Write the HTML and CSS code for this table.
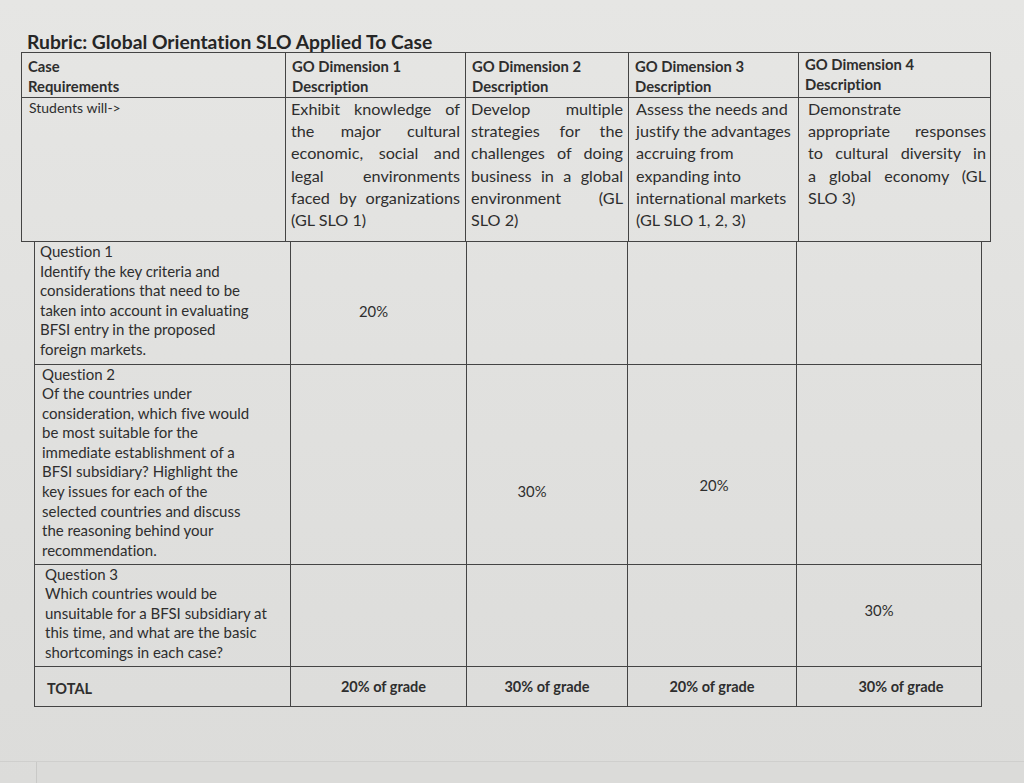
FILE: index.html
```html
<!DOCTYPE html>
<html lang="en">
<head>
<meta charset="utf-8">
<title>Rubric: Global Orientation SLO Applied To Case</title>
<link rel="stylesheet" href="styles.css">
</head>
<body>
<div class="page">
  <h1 class="title">Rubric: Global Orientation SLO Applied To Case</h1>
  <table class="rubric top">
    <colgroup>
      <col class="c0"><col class="c1"><col class="c2"><col class="c3"><col class="c4">
    </colgroup>
    <tr class="head">
      <th>Case<br>Requirements</th>
      <th>GO Dimension 1<br>Description</th>
      <th>GO Dimension 2<br>Description</th>
      <th>GO Dimension 3<br>Description</th>
      <th class="h4">GO Dimension 4<br>Description</th>
    </tr>
    <tr class="desc">
      <td class="students">Students will-&gt;</td>
      <td class="just">
        <span class="ln">Exhibit knowledge of</span>
        <span class="ln">the major cultural</span>
        <span class="ln">economic, social and</span>
        <span class="ln">legal environments</span>
        <span class="ln">faced by organizations</span>
        <span class="last">(GL SLO 1)</span>
      </td>
      <td class="just">
        <span class="ln">Develop multiple</span>
        <span class="ln">strategies for the</span>
        <span class="ln">challenges of doing</span>
        <span class="ln">business in a global</span>
        <span class="ln">environment (GL</span>
        <span class="last">SLO 2)</span>
      </td>
      <td class="left">Assess the needs and<br>justify the advantages<br>accruing from<br>expanding into<br>international markets<br>(GL SLO 1, 2, 3)</td>
      <td class="just d4">
        <span class="last">Demonstrate</span>
        <span class="ln">appropriate responses</span>
        <span class="ln">to cultural diversity in</span>
        <span class="ln">a global economy (GL</span>
        <span class="last">SLO 3)</span>
      </td>
    </tr>
  </table>
  <table class="rubric bottom">
    <colgroup>
      <col class="b0"><col class="b1"><col class="b2"><col class="b3"><col class="b4">
    </colgroup>
    <tr class="q1">
      <td class="q">Question 1<br>Identify the key criteria and<br>considerations that need to be<br>taken into account in evaluating<br>BFSI entry in the proposed<br>foreign markets.</td>
      <td class="pct pq1">20%</td>
      <td></td>
      <td></td>
      <td></td>
    </tr>
    <tr class="q2">
      <td class="q">Question 2<br>Of the countries under<br>consideration, which five would<br>be most suitable for the<br>immediate establishment of a<br>BFSI subsidiary? Highlight the<br>key issues for each of the<br>selected countries and discuss<br>the reasoning behind your<br>recommendation.</td>
      <td></td>
      <td class="pct pq2a">30%</td>
      <td class="pct pq2b">20%</td>
      <td></td>
    </tr>
    <tr class="q3">
      <td class="q">Question 3<br>Which countries would be<br>unsuitable for a BFSI subsidiary at<br>this time, and what are the basic<br>shortcomings in each case?</td>
      <td></td>
      <td></td>
      <td></td>
      <td class="pct pq3">30%</td>
    </tr>
    <tr class="total">
      <td class="tlabel">TOTAL</td>
      <td class="tval t1">20% of grade</td>
      <td class="tval">30% of grade</td>
      <td class="tval">20% of grade</td>
      <td class="tval t4">30% of grade</td>
    </tr>
  </table>
</div>
<div class="desk"></div>
</body>
</html>
```

FILE: styles.css
```css
html, body {
  margin: 0;
  padding: 0;
}
body {
  width: 1024px;
  height: 783px;
  overflow: hidden;
  background: linear-gradient(180deg, #e6e6e4 0%, #e1e1df 45%, #dcdcda 100%);
  font-family: Lato, "Noto Sans", sans-serif;
  font-variant-ligatures: none;
  color: #2e2e2e;
}
.page {
  height: 762px;
  padding-top: 31px;
  box-sizing: border-box;
  border-bottom: 1px solid #cfcfcd;
}
.desk {
  height: 21px;
  margin-left: 36px;
  border-left: 1px solid #c9c9c7;
  background: #dbdbd9;
}
.title {
  margin: 0 0 0 27px;
  font-size: 19.3px;
  font-weight: 700;
  line-height: 21px;
  color: #262626;
}
.rubric {
  border-collapse: collapse;
  table-layout: fixed;
}
.rubric td, .rubric th {
  border: 1px solid #444;
  vertical-align: top;
  padding: 0;
  box-sizing: border-box;
}
.top {
  margin-left: 21px;
  width: 969px;
}
.top .c0 { width: 264px; }
.top .c1 { width: 180px; }
.top .c2 { width: 163px; }
.top .c3 { width: 170px; }
.top .c4 { width: 192px; }
.head th {
  height: 45px;
  text-align: left;
  font-size: 14.8px;
  font-weight: 700;
  line-height: 20px;
  padding: 3px 6px 0 6px;
}
.head th.h4 { padding-top: 1px; }
.desc td {
  height: 144px;
  font-size: 16.2px;
  line-height: 22.2px;
  padding: 0 5px 0 5px;
}
.desc td.students {
  font-size: 14px;
  line-height: 19px;
  padding-left: 7px;
}
.just .ln {
  display: block;
  white-space: nowrap;
  text-align: justify;
  text-align-last: justify;
}
.just .last {
  display: block;
  white-space: nowrap;
  text-align: left;
}
.desc td.left { padding-left: 7px; white-space: nowrap; }
.desc td.d4 { padding-left: 9px; padding-right: 4px; }

.bottom {
  margin-left: 34px;
  width: 947px;
}
.bottom td { border-top: none; }
.bottom .b0 { width: 256px; }
.bottom .b1 { width: 176px; }
.bottom .b2 { width: 161px; }
.bottom .b3 { width: 169px; }
.bottom .b4 { width: 185px; }
.q1 td { height: 122px; }
.q2 td { height: 200px; }
.q3 td { height: 102px; }
.total td { height: 40px; vertical-align: middle; }
.bottom td.q {
  font-size: 15px;
  line-height: 19.6px;
  padding: 0 4px 0 5px;
  white-space: nowrap;
}
.q2 td.q { padding-left: 7px; }
.q3 td.q { padding-left: 10px; }
.pct {
  text-align: center;
  font-size: 14.8px;
  line-height: 19px;
}
.bottom td.pq1 { padding-top: 60px; padding-right: 10px; }
.bottom td.pq2a { padding-top: 117px; padding-right: 30px; }
.bottom td.pq2b { padding-top: 111px; padding-left: 4px; }
.bottom td.pq3 { padding-top: 36px; padding-right: 20px; }
.bottom td.tlabel {
  font-size: 14.5px;
  font-weight: 700;
  padding-left: 12px;
  padding-top: 4px;
}
.tval {
  text-align: center;
  font-size: 14.5px;
  font-weight: 700;
}
.bottom td.t1 { padding-left: 10px; }
.bottom td.t4 { padding-left: 24px; }
```
